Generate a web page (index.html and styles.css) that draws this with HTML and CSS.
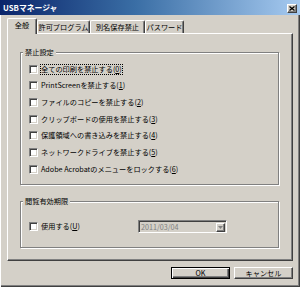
FILE: index.html
```html
<!DOCTYPE html>
<html lang="ja">
<head>
<meta charset="utf-8">
<title>USBマネージャ</title>
<link rel="stylesheet" href="styles.css">
</head>
<body>
<div class="window">
  <div class="titlebar">
    <span class="title">USBマネージャ</span>
    <button class="close" aria-label="閉じる">
      <svg width="6" height="5" viewBox="0 0 6 5"><path d="M0.5 0.5 L5.5 4.5 M5.5 0.5 L0.5 4.5" stroke="#000" stroke-width="1.3" fill="none"/></svg>
    </button>
  </div>
  <div class="tabs">
    <div class="tab active w1">全般</div>
    <div class="tab w2">許可プログラム</div>
    <div class="tab w3">別名保存禁止</div>
    <div class="tab w4">パスワード</div>
  </div>
  <div class="panel">
    <fieldset class="group g1">
      <legend>禁止設定</legend>
      <div class="opt"><span class="cb"></span><span class="lbl focus">全ての印刷を禁止する(<u>0</u>)</span></div>
      <div class="opt"><span class="cb"></span><span class="lbl">PrintScreenを禁止する(<u>1</u>)</span></div>
      <div class="opt"><span class="cb"></span><span class="lbl">ファイルのコピーを禁止する(<u>2</u>)</span></div>
      <div class="opt"><span class="cb"></span><span class="lbl">クリップボードの使用を禁止する(<u>3</u>)</span></div>
      <div class="opt"><span class="cb"></span><span class="lbl">保護領域への書き込みを禁止する(<u>4</u>)</span></div>
      <div class="opt"><span class="cb"></span><span class="lbl">ネットワークドライブを禁止する(<u>5</u>)</span></div>
      <div class="opt"><span class="cb"></span><span class="lbl">Adobe Acrobatのメニューをロックする(<u>6</u>)</span></div>
    </fieldset>
    <fieldset class="group g2">
      <legend>閲覧有効期限</legend>
      <div class="opt">
        <span class="cb"></span><span class="lbl wide">使用する(<u>U</u>)</span>
        <div class="combo">
          <span class="combo-text">2011/03/04</span>
          <span class="combo-btn"><svg width="5" height="3" viewBox="0 0 5 3"><path d="M0 0 H5 L2.5 3 Z" fill="#808080"/></svg></span>
        </div>
      </div>
    </fieldset>
  </div>
  <div class="buttons">
    <button class="btn default">OK</button>
    <button class="btn">キャンセル</button>
  </div>
</div>
</body>
</html>
```
FILE: styles.css
```css
html, body {
  margin: 0;
  padding: 0;
  background: #d4d0c8;
}
body {
  font-family: "Noto Sans CJK JP", "Noto Sans", sans-serif;
  font-size: 7.2px;
  color: #000;
}
.window {
  width: 300px;
  height: 287px;
  box-sizing: border-box;
  background: #d4d0c8;
  box-shadow: inset 1px 0 #ffffff, inset -1px -1px #404040, inset -2px -2px #808080;
  overflow: hidden;
}
.titlebar {
  height: 15px;
  background: linear-gradient(to right, #0a246a 0%, #3a6ea5 45%, #a6caf0 100%);
  display: flex;
  align-items: center;
  padding: 0 3px 0 3px;
  box-sizing: border-box;
}
.title {
  color: #fff;
  font-weight: bold;
  font-size: 7.8px;
  line-height: 10px;
  flex: 1;
}
.close {
  width: 10px;
  height: 9px;
  margin: 1px 0 0 0;
  padding: 0;
  background: #d4d0c8;
  border: 1px solid;
  border-color: #ffffff #404040 #404040 #ffffff;
  box-shadow: inset -1px -1px #808080;
  display: flex;
  align-items: center;
  justify-content: center;
  box-sizing: border-box;
}
.close svg { display: block; }
.tabs {
  display: flex;
  align-items: flex-end;
  height: 15px;
  margin: 3px 0 0 7px;
  position: relative;
  z-index: 1;
}
.tab {
  height: 13px;
  box-sizing: border-box;
  border-top: 1px solid #ffffff;
  border-left: 1px solid #ffffff;
  border-right: 1px solid #404040;
  box-shadow: inset -1px 0 #808080;
  border-radius: 2px 2px 0 0;
  background: #d4d0c8;
  text-align: center;
  line-height: 12px;
  white-space: nowrap;
}
.tab.active {
  height: 16px;
  margin-bottom: -1px;
  line-height: 13px;
}
.w1 { width: 30px; }
.w2 { width: 53px; }
.w3 { width: 55px; }
.w4 { width: 39px; }
.panel {
  width: 286px;
  height: 228px;
  margin-left: 7px;
  box-sizing: border-box;
  border-top: 1px solid #ffffff;
  border-left: 1px solid #ffffff;
  border-right: 1px solid #404040;
  border-bottom: 1px solid #404040;
  box-shadow: inset -1px -1px #808080;
  padding-left: 12px;
  padding-top: 14px;
}
.group {
  width: 259px;
  box-sizing: border-box;
  margin: 0;
  border: 1px solid #808080;
  box-shadow: inset 1px 1px #ffffff, 1px 1px #ffffff;
  padding: 0 0 0 8px;
  min-inline-size: 0;
}
.group legend {
  padding: 0 2px;
  margin-left: -6px;
  line-height: 9px;
  background: #d4d0c8;
}
.g1 { padding-top: 4px; padding-bottom: 6px; }
.g2 { margin-top: 12px; padding-top: 13px; padding-bottom: 12px; }
.opt {
  display: flex;
  align-items: center;
  height: 16.67px;
}
.cb {
  width: 9px;
  height: 9px;
  box-sizing: border-box;
  background: #fff;
  border: 1px solid;
  border-color: #808080 #ffffff #ffffff #808080;
  box-shadow: inset 1px 1px #404040, inset -1px -1px #d4d0c8;
  flex: none;
}
.lbl {
  margin-left: 3px;
  line-height: 9px;
  white-space: nowrap;
}
.focus {
  outline: 1px dotted #000;
  outline-offset: 0;
}
.wide { width: 97px; }
.combo {
  width: 89px;
  height: 13px;
  box-sizing: border-box;
  border: 1px solid;
  border-color: #808080 #ffffff #ffffff #808080;
  box-shadow: inset 1px 1px #404040;
  background: #d4d0c8;
  display: flex;
  align-items: center;
  padding: 1px 1px 0 2px;
}
.combo-text {
  flex: 1;
  color: #808080;
  line-height: 9px;
}
.combo-btn {
  width: 9px;
  height: 9px;
  box-sizing: border-box;
  border: 1px solid;
  border-color: #ffffff #404040 #404040 #ffffff;
  box-shadow: inset -1px -1px #808080;
  background: #d4d0c8;
  display: flex;
  align-items: center;
  justify-content: center;
}
.combo-btn svg { display: block; }
.buttons {
  display: flex;
  justify-content: flex-end;
  gap: 4px;
  margin-top: 6px;
  padding-right: 7px;
}
.btn {
  width: 59px;
  height: 12px;
  box-sizing: border-box;
  padding: 0;
  font-family: inherit;
  font-size: 7.2px;
  line-height: 9px;
  color: #000;
  background: #d4d0c8;
  border: 1px solid;
  border-color: #ffffff #404040 #404040 #ffffff;
  box-shadow: inset -1px -1px #808080;
}
.btn.default {
  border: 1px solid #000;
  box-shadow: inset 1px 1px #ffffff, inset -1px -1px #404040, inset -2px -2px #808080;
}
```
